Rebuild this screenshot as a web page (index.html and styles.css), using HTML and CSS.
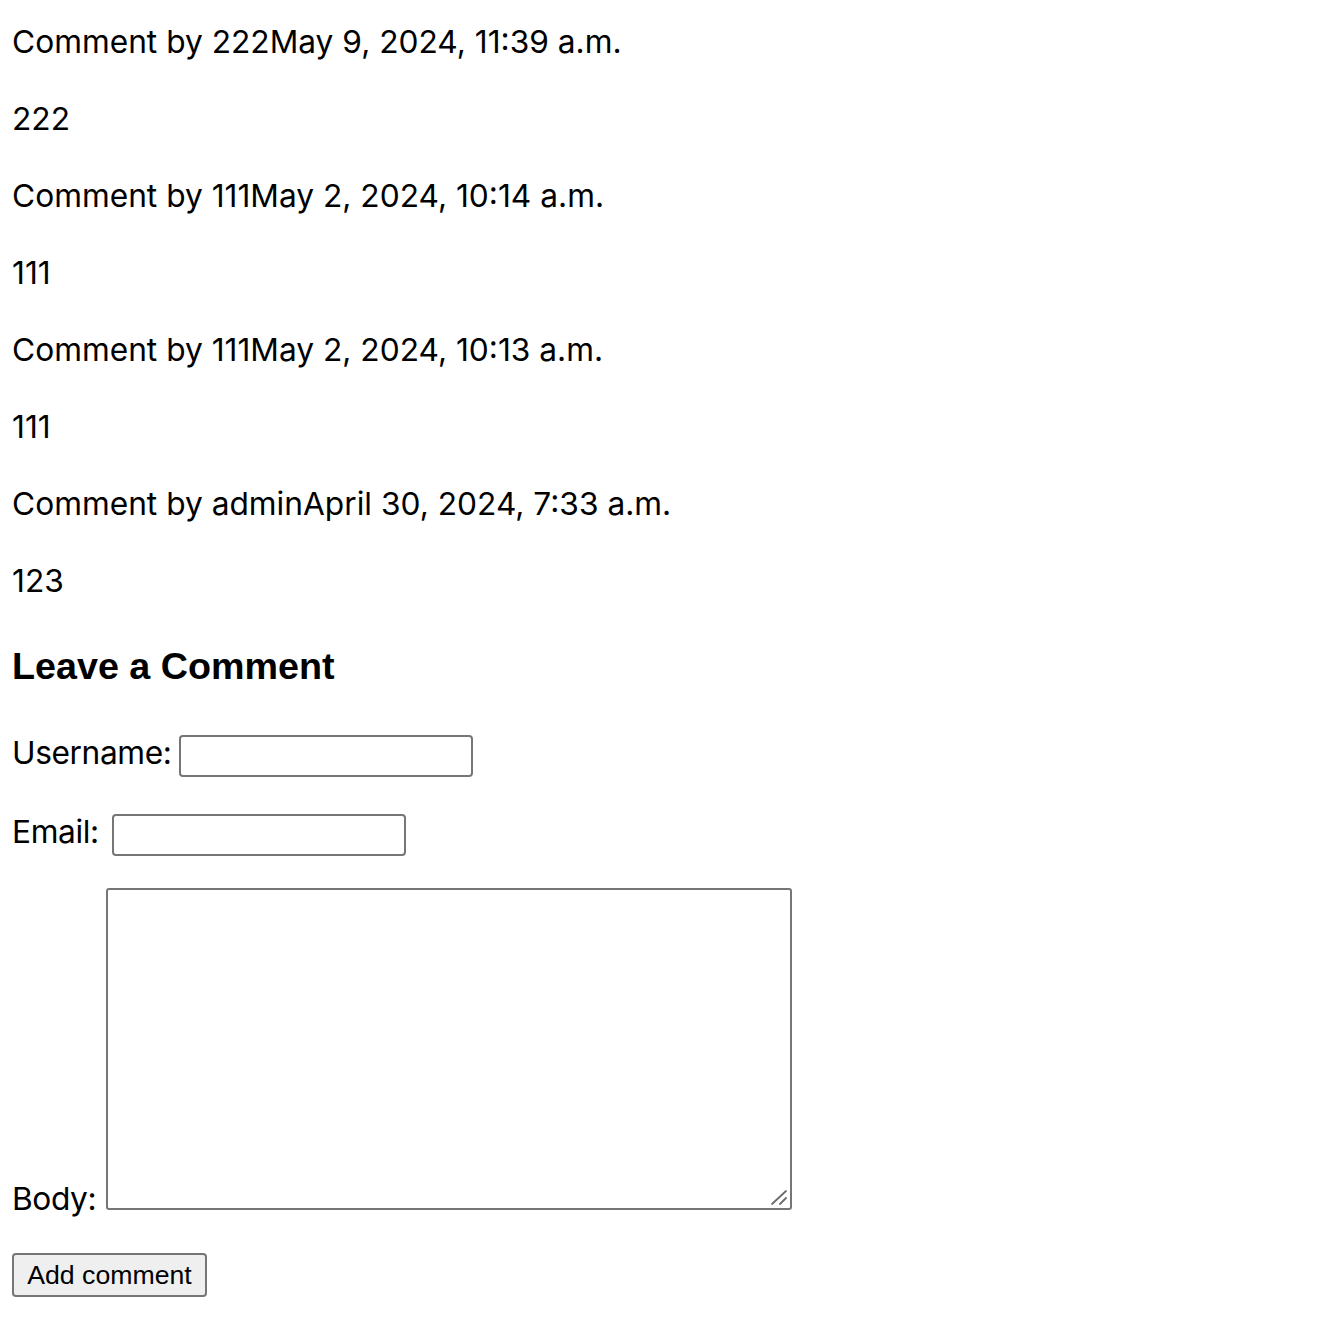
FILE: index.html
```html
<!DOCTYPE html>
<html lang="en">
<head>
<meta charset="utf-8">
<title>Comments</title>
<link rel="stylesheet" href="styles.css">
</head>
<body>
<div class="page">
  <section class="comments">
    <div class="comment">
      <p class="meta">Comment by 222<span class="date">May 9, 2024, 11:39 a.m.</span></p>
      <p class="text">222</p>
    </div>
    <div class="comment">
      <p class="meta">Comment by 111<span class="date">May 2, 2024, 10:14 a.m.</span></p>
      <p class="text">111</p>
    </div>
    <div class="comment">
      <p class="meta">Comment by 111<span class="date">May 2, 2024, 10:13 a.m.</span></p>
      <p class="text">111</p>
    </div>
    <div class="comment">
      <p class="meta">Comment by admin<span class="date">April 30, 2024, 7:33 a.m.</span></p>
      <p class="text">123</p>
    </div>
  </section>

  <h2 class="form-title">Leave a Comment</h2>
  <form class="comment-form">
    <p class="row row-user"><label class="label" for="name">Username:</label><input class="field" type="text" id="name"></p>
    <p class="row row-email"><label class="label" for="email">Email:</label><input class="field" type="email" id="email"></p>
    <p class="row row-body"><label class="label label-body" for="body">Body:</label><span class="area-wrap"><textarea class="area" id="body"></textarea><svg class="grip" width="20" height="20" viewBox="0 0 20 20" aria-hidden="true"><path d="M2 16 L16 3 M10 16 L16 10" stroke="#6b6b6b" stroke-width="1.8" fill="none" stroke-linecap="round"/></svg></span></p>
    <button class="submit" type="button">Add comment</button>
  </form>
</div>
</body>
</html>
```
FILE: styles.css
```css
html, body {
  margin: 0;
  padding: 0;
  background: #ffffff;
}

.page {
  padding: 19px 12px 0;
  font-family: Inter, "Liberation Sans", sans-serif;
  font-size: 31.7px;
  line-height: 45px;
  color: #000000;
}

.comments p {
  margin: 0 0 32px;
}

.form-title {
  margin: 42px 0 0;
  font-family: "Liberation Sans", Arial, sans-serif;
  font-size: 37.7px;
  line-height: 43px;
  font-weight: bold;
}

.comment-form {
  margin: 0;
}

.row {
  display: flex;
  align-items: center;
  margin: 0;
}

.row-user {
  margin-top: 47px;
  gap: 8px;
}

.row-email {
  margin-top: 37px;
  gap: 13px;
}

.row-body {
  margin-top: 32px;
  align-items: flex-end;
  gap: 10px;
}

.label {
  line-height: 36px;
  margin-bottom: 6px;
  letter-spacing: -0.4px;
}

.label-body {
  line-height: 32px;
  margin-bottom: -5px;
}

.field {
  box-sizing: border-box;
  width: 294px;
  height: 42px;
  margin: 0;
  padding: 2px 4px;
  border: 2px solid #767676;
  border-radius: 4px;
  background: #ffffff;
  font-family: "Liberation Sans", Arial, sans-serif;
  font-size: 26.67px;
}

.area-wrap {
  position: relative;
  display: block;
  width: 686px;
  height: 322px;
}

.area {
  box-sizing: border-box;
  display: block;
  width: 686px;
  height: 322px;
  margin: 0;
  padding: 4px;
  border: 2px solid #767676;
  border-radius: 3px;
  background: #ffffff;
  font-family: "Liberation Mono", monospace;
  font-size: 26.67px;
  resize: none;
}

.grip {
  position: absolute;
  right: 2px;
  bottom: 2px;
}

.submit {
  box-sizing: border-box;
  display: block;
  width: 195px;
  height: 44px;
  margin: 43px 0 0;
  padding: 0;
  border: 2px solid #767676;
  border-radius: 4px;
  background: #efefef;
  color: #000000;
  font-family: "Liberation Sans", Arial, sans-serif;
  font-size: 26.67px;
  line-height: 36px;
}
```
